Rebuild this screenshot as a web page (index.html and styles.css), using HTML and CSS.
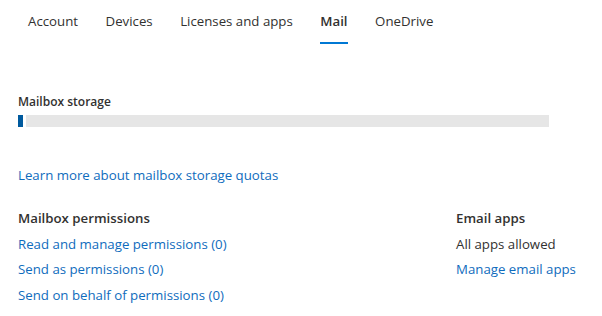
FILE: index.html
```html
<!DOCTYPE html>
<html lang="en">
<head>
<meta charset="utf-8">
<link rel="stylesheet" href="styles.css">
</head>
<body>
<nav class="tabs">
  <a class="tab">Account</a>
  <a class="tab">Devices</a>
  <a class="tab">Licenses and apps</a>
  <a class="tab active">Mail</a>
  <a class="tab">OneDrive</a>
</nav>
<main class="content">
  <section class="storage">
    <div class="label">Mailbox storage</div>
    <div class="bar"><div class="fill" style="width:5px"></div></div>
  </section>
  <a class="link learn">Learn more about mailbox storage quotas</a>
  <div class="cols">
    <section class="col perms">
      <div class="heading">Mailbox permissions</div>
      <a class="link row">Read and manage permissions (0)</a>
      <a class="link row">Send as permissions (0)</a>
      <a class="link row">Send on behalf of permissions (0)</a>
    </section>
    <section class="col apps">
      <div class="heading">Email apps</div>
      <div class="text row">All apps allowed</div>
      <a class="link row">Manage email apps</a>
    </section>
  </div>
</main>
</body>
</html>
```
FILE: styles.css
```css
* { box-sizing: border-box; }
html, body { margin: 0; background: #fff; }
body {
  font-family: "Open Sans", "Noto Sans", sans-serif;
  font-size: 13.25px;
  color: #323130;
  width: 602px;
  height: 316px;
  overflow: hidden;
}
.tabs {
  display: flex;
  gap: 27.5px;
  padding-left: 28px;
  height: 44px;
}
.tab {
  display: block;
  padding-top: 11px;
  line-height: 20px;
  height: 44px;
  border-bottom: 2px solid transparent;
  color: #323130;
}
.tab.active {
  font-weight: 600;
  border-bottom-color: #0078d4;
}
.content {
  padding-left: 18px;
}
.storage {
  padding-top: 49px;
  width: 531px;
}
.label {
  font-weight: 600;
  font-size: 12px;
  line-height: 18px;
}
.bar {
  margin-top: 4px;
  height: 12px;
  background: #e6e6e6;
  display: flex;
}
.fill {
  background: #005a9e;
  border-right: 3px solid #fff;
  box-sizing: content-box;
}
.link {
  color: #0f6cbd;
  text-decoration: none;
  display: block;
}
.learn {
  margin-top: 38px;
  line-height: 20px;
}
.cols {
  display: flex;
  margin-top: 23px;
}
.col { display: flex; flex-direction: column; }
.perms { width: 438px; }
.heading {
  font-weight: 600;
  line-height: 20px;
}
.row {
  margin-top: 5.5px;
  line-height: 20px;
}
.text { color: #323130; }
```
